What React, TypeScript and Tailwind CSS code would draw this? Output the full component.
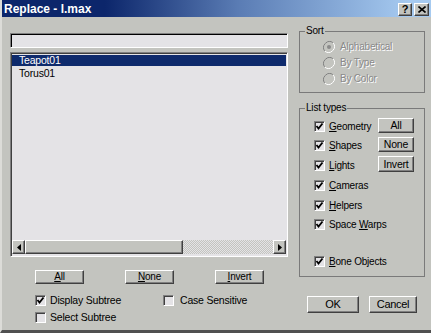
import React from "react";

const raised =
  "border border-t-white border-l-white border-r-[#404040] border-b-[#404040] shadow-[inset_-1px_-1px_#808080] bg-[#c3c4bf]";

function Btn({ children, className = "" }: { children: React.ReactNode; className?: string }) {
  return (
    <div className={`${raised} flex items-center justify-center leading-none text-black ${className}`}>
      {children}
    </div>
  );
}

function Check({ checked }: { checked: boolean }) {
  return (
    <span className="w-[11px] h-[11px] shrink-0 border border-t-[#808080] border-l-[#808080] border-b-white border-r-white shadow-[inset_1px_1px_#404040] bg-[#e4e3e6] flex items-center justify-center">
      {checked && (
        <svg width="9" height="9" viewBox="0 0 9 9">
          <path d="M1.5 4 L3.5 6.5 L7.5 1.5" stroke="#000" strokeWidth="1.8" fill="none" />
        </svg>
      )}
    </span>
  );
}

function Radio({ on }: { on: boolean }) {
  return (
    <svg width="12" height="12" viewBox="0 0 12 12" className="shrink-0">
      <path d="M10.2 1.8 A6 6 0 0 0 1.8 10.2" stroke="#808080" strokeWidth="1" fill="none" />
      <path d="M1.8 10.2 A6 6 0 0 0 10.2 1.8" stroke="#ffffff" strokeWidth="1" fill="none" />
      <circle cx="6" cy="6" r="4.5" fill="#c3c4bf" />
      {on && <circle cx="6" cy="6" r="2" fill="#8a8a8a" />}
    </svg>
  );
}

function U({ c, rest }: { c: string; rest: string }) {
  return (
    <span>
      <span className="underline underline-offset-[1px]">{c}</span>
      {rest}
    </span>
  );
}

export default function App() {
  const types: { label: React.ReactNode; mt: string }[] = [
    { label: <U c="G" rest="eometry" />, mt: "mt-[0px]" },
    { label: <U c="S" rest="hapes" />, mt: "mt-[8px]" },
    { label: <U c="L" rest="ights" />, mt: "mt-[9px]" },
    { label: <U c="C" rest="ameras" />, mt: "mt-[9px]" },
    { label: <U c="H" rest="elpers" />, mt: "mt-[9px]" },
    {
      label: (
        <span>
          Space <span className="underline underline-offset-[1px]">W</span>arps
        </span>
      ),
      mt: "mt-[8px]",
    },
    { label: <U c="B" rest="one Objects" />, mt: "mt-[26px]" },
  ];

  return (
    <div className="w-[431px] h-[333px] bg-[#c3c4bf] flex flex-col font-['Liberation_Sans',Arial,sans-serif] text-[10px] tracking-[-0.2px] text-black border-b-[3px] border-b-[#505050] border-l-2 border-l-[#dcdcd8] overflow-hidden">
      {/* Title bar */}
      <div className="h-[17px] shrink-0 flex items-center justify-between pl-[2px] pr-[2px] bg-[linear-gradient(to_right,#0c266b_0%,#0c266b_24%,#5a7cb4_55%,#a6caf0_95%)]">
        <span className="text-white font-bold text-[12px] tracking-normal leading-none">Replace - l.max</span>
        <div className="flex gap-[2px] pt-[1px]">
          <div className={`${raised} w-[14px] h-[13px] flex items-center justify-center`}>
            <span className="font-bold text-[11px] leading-none">?</span>
          </div>
          <div className={`${raised} w-[15px] h-[13px] flex items-center justify-center`}>
            <svg width="8" height="7" viewBox="0 0 8 7">
              <path d="M0.5 0.5 L7.5 6.5 M7.5 0.5 L0.5 6.5" stroke="#000" strokeWidth="1.6" />
            </svg>
          </div>
        </div>
      </div>

      {/* Body */}
      <div className="flex flex-1 pl-[8px]">
        {/* Left column */}
        <div className="w-[278px] flex flex-col pt-[16px]">
          <div className="h-[15px] bg-[#e4e3e6] border border-t-[#808080] border-l-[#808080] border-b-white border-r-white shadow-[inset_1px_1px_#000]" />
          <div className="mt-[4px] h-[205px] bg-[#e4e3e6] border border-t-[#808080] border-l-[#808080] border-b-white border-r-white shadow-[inset_1px_1px_#404040] flex flex-col pt-[2px] pl-[1px] pr-[1px] pb-[2px]">
            <div className="flex-1 flex flex-col text-[10.5px]">
              <div className="h-[11px] bg-[#0e2a6c] text-white leading-[11px] pl-[7px]">Teapot01</div>
              <div className="h-[12px] leading-[12px] pl-[7px] mt-[1px]">Torus01</div>
            </div>
            <div className="h-[14px] flex">
              <div className={`${raised} w-[13px] h-[14px] flex items-center justify-center`}>
                <svg width="4" height="7" viewBox="0 0 4 7">
                  <path d="M4 0 L0 3.5 L4 7 Z" fill="#000" />
                </svg>
              </div>
              <div className={`${raised} w-[158px] h-[14px]`} />
              <div className="flex-1 h-[14px] bg-[repeating-conic-gradient(#e4e3e6_0%_25%,#c3c4bf_0%_50%)] bg-[length:2px_2px]" />
              <div className={`${raised} w-[13px] h-[14px] flex items-center justify-center`}>
                <svg width="4" height="7" viewBox="0 0 4 7">
                  <path d="M0 0 L4 3.5 L0 7 Z" fill="#000" />
                </svg>
              </div>
            </div>
          </div>
          <div className="mt-[13px] flex pl-[25px] gap-[41px]">
            <Btn className="w-[49px] h-[14px]">
              <U c="A" rest="ll" />
            </Btn>
            <Btn className="w-[49px] h-[14px]">
              <U c="N" rest="one" />
            </Btn>
            <Btn className="w-[49px] h-[14px]">
              <U c="I" rest="nvert" />
            </Btn>
          </div>
          <div className="mt-[11px] flex pl-[25px] text-[10.5px]">
            <div className="w-[128px] flex items-center gap-[4px] h-[11px]">
              <Check checked />
              <span className="leading-none">Display Subtree</span>
            </div>
            <div className="flex items-center gap-[6px] h-[11px]">
              <Check checked={false} />
              <span className="leading-none">Case Sensitive</span>
            </div>
          </div>
          <div className="mt-[6px] flex pl-[25px] text-[10.5px]">
            <div className="flex items-center gap-[4px] h-[11px]">
              <Check checked={false} />
              <span className="leading-none">Select Subtree</span>
            </div>
          </div>
        </div>

        {/* Right column */}
        <div className="ml-[11px] w-[126px] flex flex-col pt-[8px]">
          <fieldset className="border border-[#7a7a7a] h-[68px] m-0 p-0">
            <legend className="ml-[5px] px-[1px] leading-[12px]">Sort</legend>
            <div className="flex flex-col pl-[23px] pt-[4px] gap-[4px] text-[#8a8a8a] [text-shadow:1px_1px_0_#ffffff]">
              <div className="flex items-center gap-[5px] h-[12px]">
                <Radio on />
                <span className="leading-none">Alphabetical</span>
              </div>
              <div className="flex items-center gap-[5px] h-[12px]">
                <Radio on={false} />
                <span className="leading-none">By Type</span>
              </div>
              <div className="flex items-center gap-[5px] h-[12px]">
                <Radio on={false} />
                <span className="leading-none">By Color</span>
              </div>
            </div>
          </fieldset>
          <fieldset className="mt-[9px] border border-[#7a7a7a] h-[175px] m-0 p-0">
            <legend className="ml-[5px] px-[1px] leading-[12px]">List types</legend>
            <div className="flex">
              <div className="w-[78px] pl-[14px] pt-[7px] flex flex-col">
                {types.map((t, i) => (
                  <div key={i} className={`${t.mt} flex items-center gap-[4px] h-[11px]`}>
                    <Check checked />
                    <span className="leading-none whitespace-nowrap">{t.label}</span>
                  </div>
                ))}
              </div>
              <div className="flex flex-col pt-[4px] gap-[4px] text-[10.5px]">
                <Btn className="w-[36px] h-[15px]">All</Btn>
                <Btn className="w-[36px] h-[15px]">None</Btn>
                <Btn className="w-[36px] h-[16px]">Invert</Btn>
              </div>
            </div>
          </fieldset>
          <div className="mt-[19px] flex pl-[8px] gap-[10px] text-[11px] tracking-[-0.3px]">
            <Btn className="w-[52px] h-[17px]">OK</Btn>
            <Btn className="w-[48px] h-[17px]">Cancel</Btn>
          </div>
        </div>
      </div>
    </div>
  );
}
